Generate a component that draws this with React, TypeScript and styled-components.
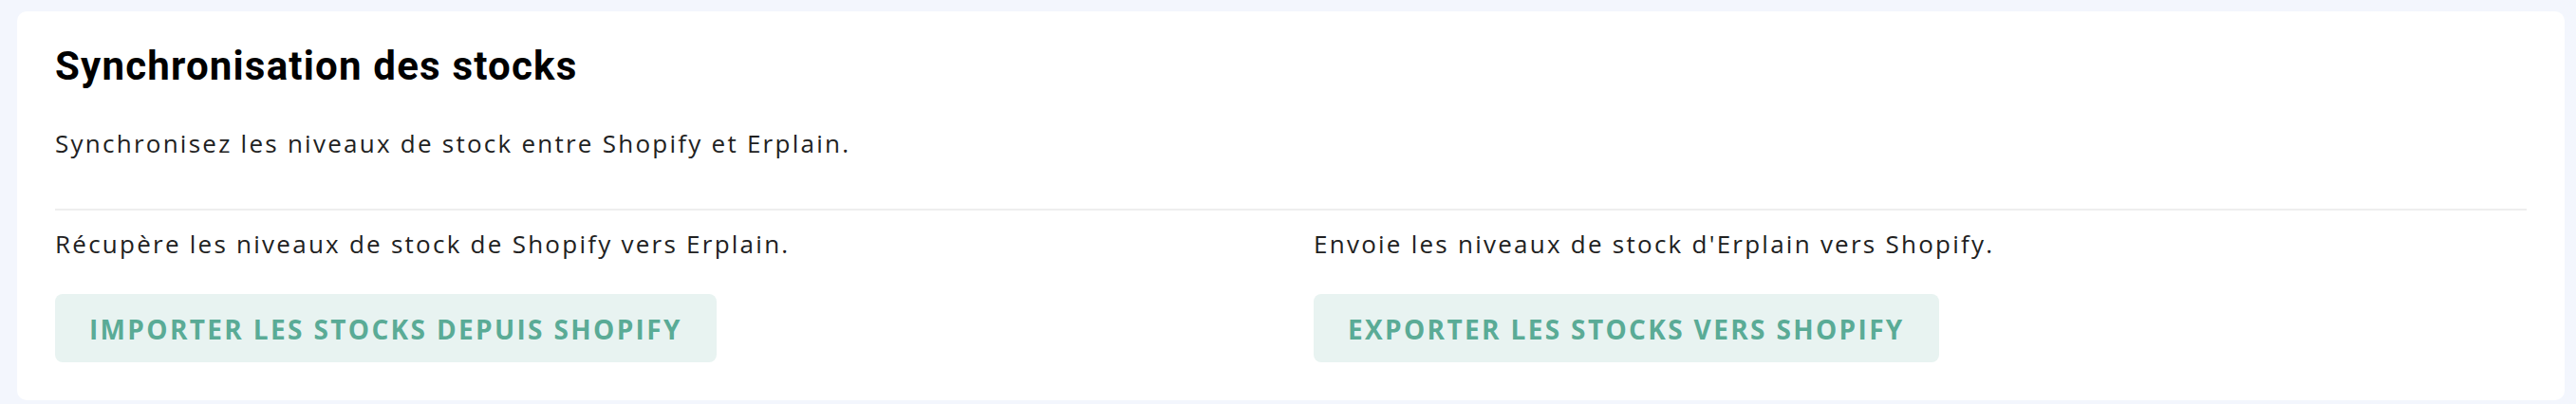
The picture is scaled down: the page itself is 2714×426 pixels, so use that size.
import styled, { createGlobalStyle } from 'styled-components'

const GlobalStyle = createGlobalStyle`
  html, body {
    margin: 0;
    padding: 0;
    background: #f3f6fd;
  }
  * {
    box-sizing: border-box;
  }
`

const ACTIONS = [
  {
    key: 'import',
    description: 'Récupère les niveaux de stock de Shopify vers Erplain.',
    label: 'Importer les stocks depuis Shopify',
  },
  {
    key: 'export',
    description: "Envoie les niveaux de stock d'Erplain vers Shopify.",
    label: 'Exporter les stocks vers Shopify',
  },
]

export default function App() {
  return (
    <Page>
      <GlobalStyle />
      <Card>
        <Title>Synchronisation des stocks</Title>
        <Lead>Synchronisez les niveaux de stock entre Shopify et Erplain.</Lead>
        <Divider />
        <Columns>
          {ACTIONS.map((action) => (
            <Column key={action.key}>
              <Text>{action.description}</Text>
              <ActionButton type="button">{action.label}</ActionButton>
            </Column>
          ))}
        </Columns>
      </Card>
    </Page>
  )
}

// Styles

const Page = styled.div`
  min-height: 426px;
  padding: 12px 12px 4px 18px;
  background: #f3f6fd;
`

const Card = styled.section`
  background: #ffffff;
  border-radius: 10px;
  padding: 34px 40px 40px;
`

const Title = styled.h2`
  margin: 0;
  font-family: Roboto, 'Liberation Sans', sans-serif;
  font-weight: 700;
  font-size: 42px;
  line-height: 48px;
  letter-spacing: 1.2px;
  color: #000000;
`

const Lead = styled.p`
  margin: 37px 0 0;
  font-family: 'Open Sans', 'Liberation Sans', sans-serif;
  font-size: 26px;
  line-height: 40px;
  letter-spacing: 2.25px;
  color: #212121;
`

const Divider = styled.hr`
  margin: 49px 0 0;
  border: 0;
  height: 2px;
  background: #eeeeee;
`

const Columns = styled.div`
  display: grid;
  grid-template-columns: 1fr 1fr;
  column-gap: 48px;
  padding-top: 15px;
`

const Column = styled.div`
  display: flex;
  flex-direction: column;
  align-items: flex-start;
  gap: 33px;
`

const Text = styled.p`
  margin: 0;
  font-family: 'Open Sans', 'Liberation Sans', sans-serif;
  font-size: 26px;
  line-height: 40px;
  letter-spacing: 2.25px;
  color: #212121;
`

const ActionButton = styled.button`
  display: inline-flex;
  align-items: center;
  height: 72px;
  padding: 2px 36px 0;
  border: 0;
  border-radius: 8px;
  background: #e8f3f1;
  color: #5aab96;
  font-family: 'Open Sans', 'Liberation Sans', sans-serif;
  font-weight: 700;
  font-size: 28px;
  letter-spacing: 2.35px;
  text-transform: uppercase;
  cursor: pointer;
`
